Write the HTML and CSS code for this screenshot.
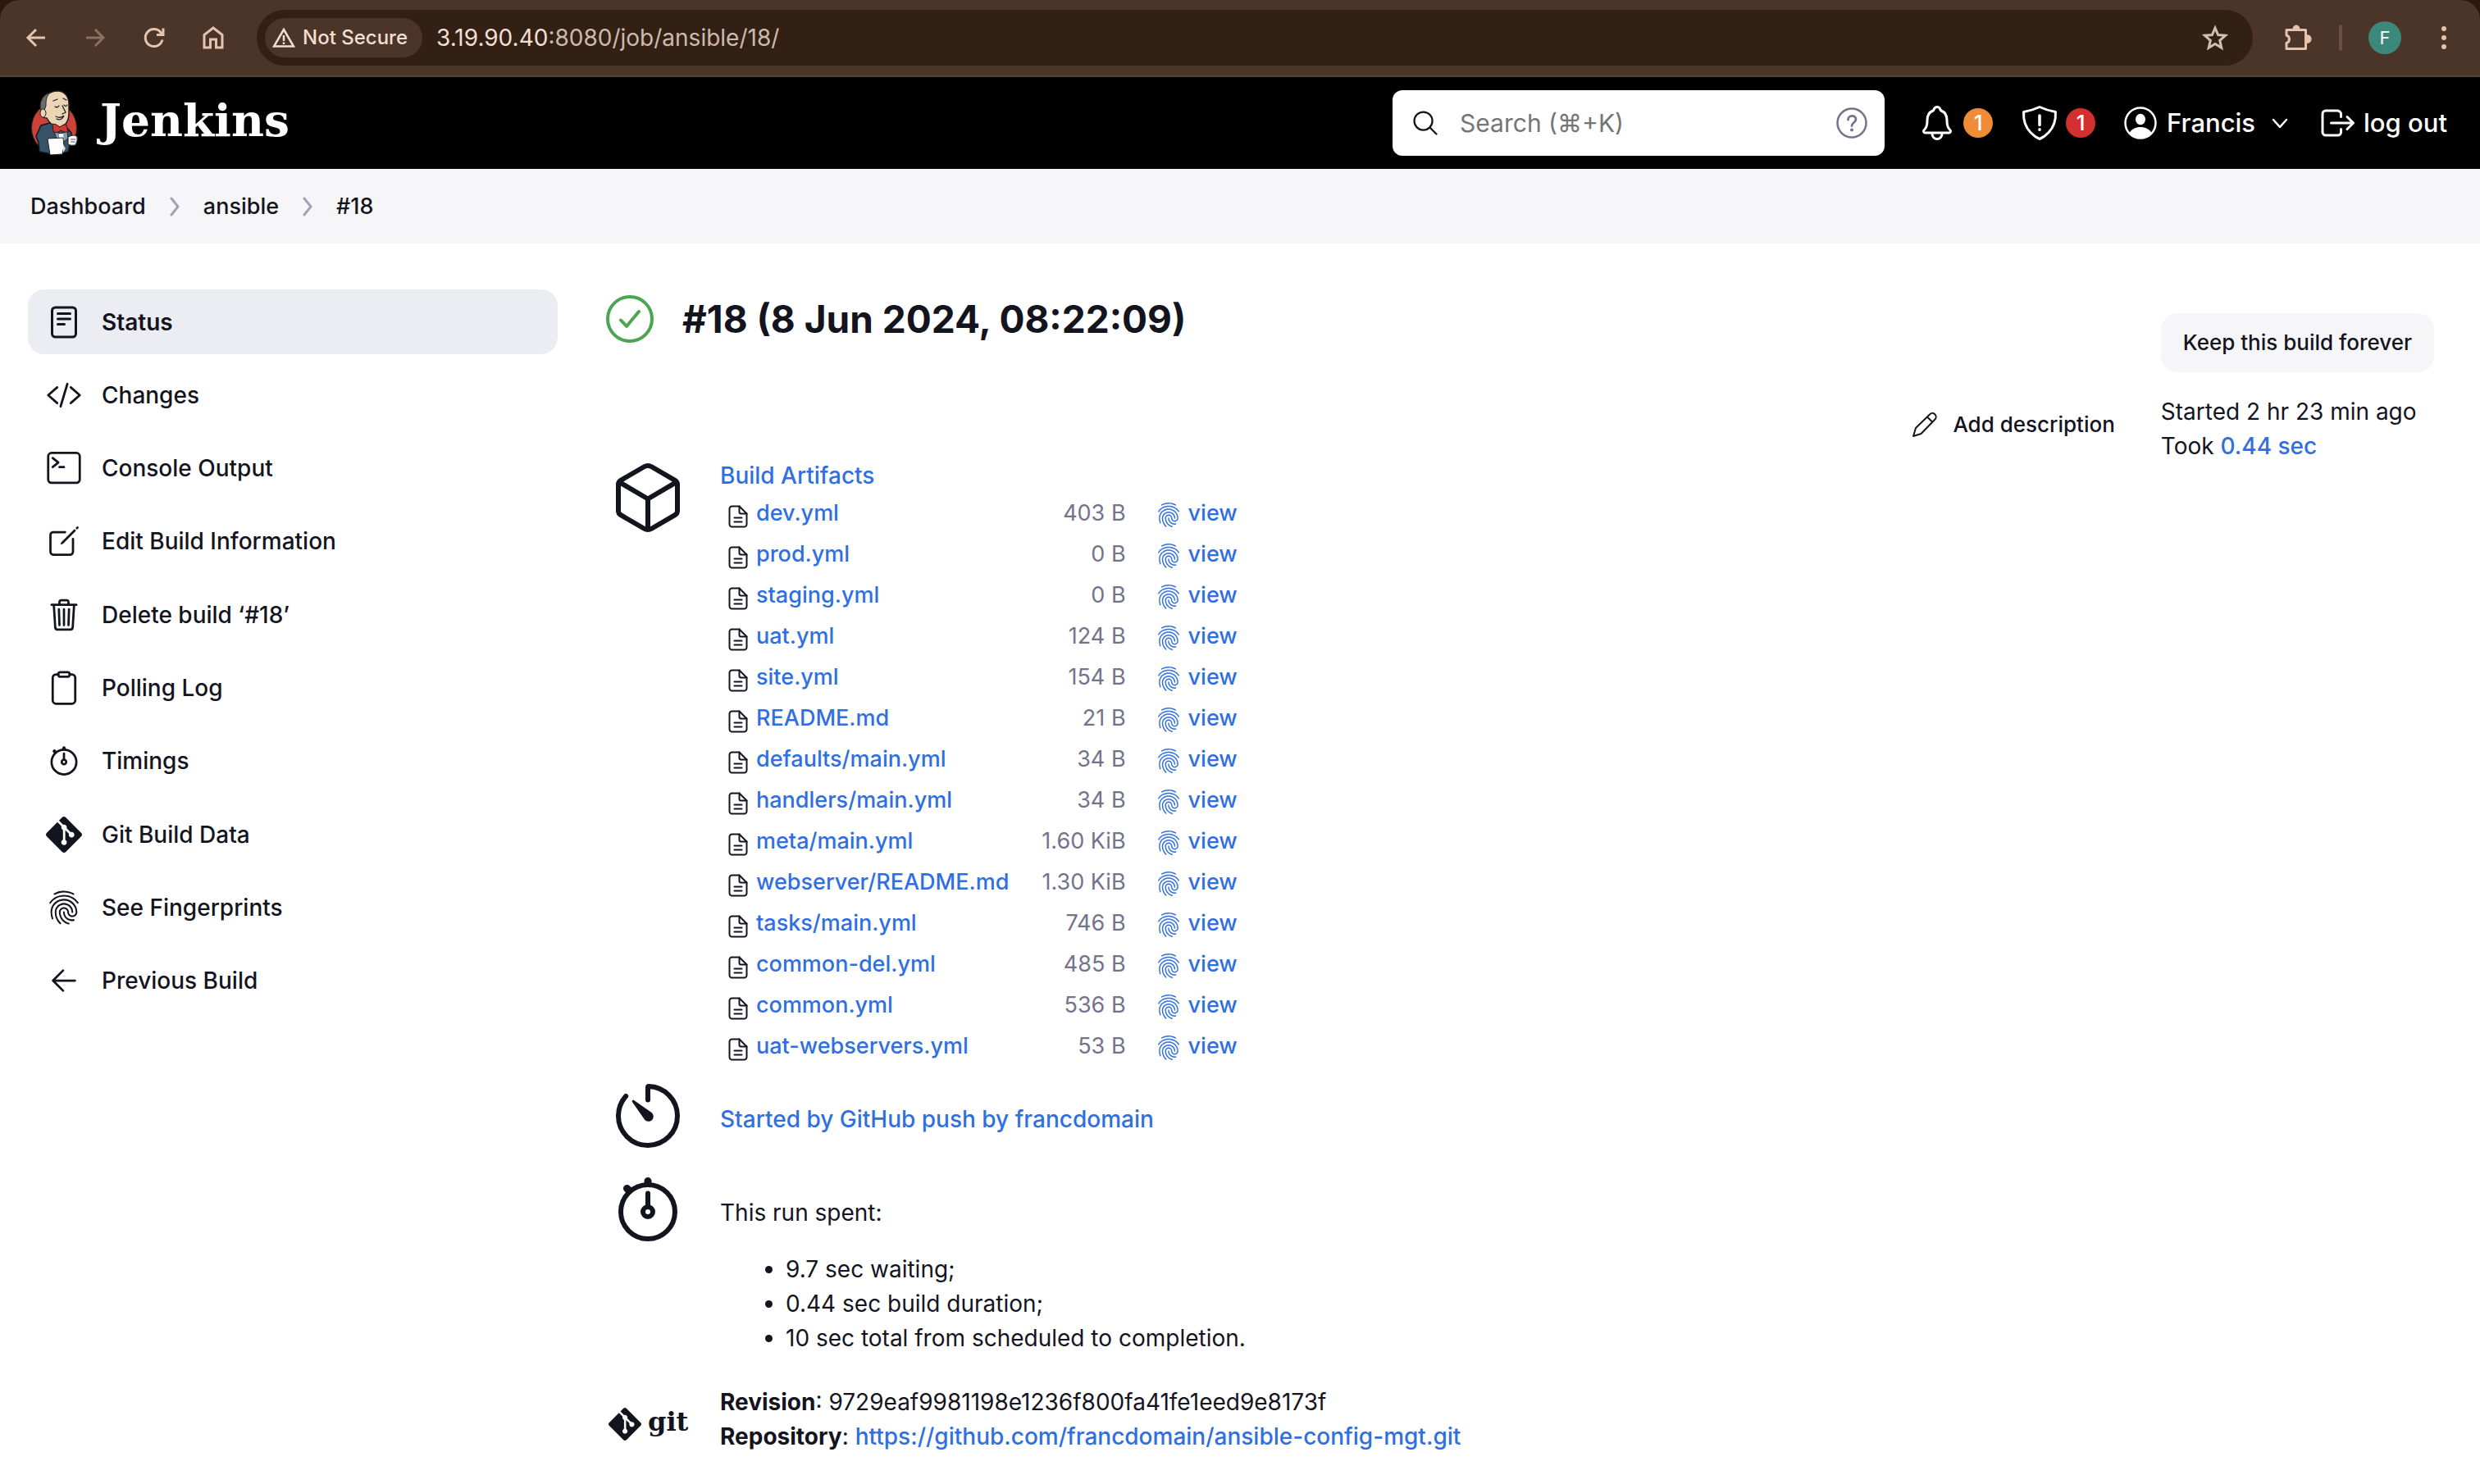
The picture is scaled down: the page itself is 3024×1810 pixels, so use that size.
FILE: index.html
```html
<!DOCTYPE html>
<html lang="en">
<head>
<meta charset="utf-8">
<title>ansible #18 [Jenkins]</title>
<link rel="stylesheet" href="styles.css">
</head>
<body>
<svg class="sprite" aria-hidden="true">
  <symbol id="i-file" viewBox="0 0 24 28"><g fill="none" stroke="currentColor" stroke-width="2" stroke-linejoin="round" stroke-linecap="round"><path d="M13.500 1.500H4.500A3 3 0 0 0 1.500 4.500V23.500A3 3 0 0 0 4.500 26.500H19.500A3 3 0 0 0 22.500 23.500V10.500Z"/><path d="M13.500 1.500V8.500A2 2 0 0 0 15.500 10.500H22.500M7.500 15.500H16.500M7.500 20.500H16.500"/></g></symbol>
  <symbol id="i-finger" viewBox="0 0 512 512"><path fill="currentColor" d="M390.42 75.28a10.45 10.45 0 01-5.32-1.44C340.72 50.08 302.35 40 256.35 40c-45.77 0-89.23 11.28-128.76 33.84C122 77 115.11 74.8 111.87 69a12.4 12.4 0 014.63-16.32A281.81 281.81 0 01256.35 16c49.23 0 92.23 11.28 139.39 36.48a12 12 0 014.85 16.08 11.3 11.3 0 01-10.17 6.72zm-330.79 126a11.73 11.73 0 01-6.7-2.16 12.26 12.26 0 01-2.78-16.8c22.89-33.6 52-60 86.69-78.48 72.58-38.84 165.51-39.12 238.32-.24 34.68 18.48 63.8 44.64 86.69 78a12.29 12.29 0 01-2.78 16.8 11.26 11.26 0 01-16.18-2.88c-20.8-30.24-47.15-54-78.36-70.56-66.34-35.28-151.18-35.28-217.29.24-31.44 16.8-57.79 40.8-78.59 71a10 10 0 01-9.02 5.08zM204.1 491a10.66 10.66 0 01-8.09-3.6C175.9 466.48 165 453 149.55 424c-16-29.52-24.27-65.52-24.27-104.16 0-71.28 58.71-129.36 130.84-129.36S387 248.56 387 319.84a11.56 11.56 0 11-23.11 0c0-58.08-48.32-105.36-107.72-105.36S148.4 261.76 148.4 319.84c0 34.56 7.4 66.48 21.49 92.4 14.8 27.6 25 39.36 42.77 58.08a12.67 12.67 0 010 17 12.44 12.44 0 01-8.56 3.680zM369.85 446.6c-27.51 0-51.78-7.2-71.66-21.36-34.44-24.24-55-63.6-55-105.36a11.57 11.57 0 1123.12 0c0 33.84 16.64 65.76 44.84 85.44 16.41 11.52 35.6 17 58.72 17a130.93 130.93 0 0023.35-2.4c6.24-1.2 12.25 3.12 13.4 9.84a11.92 11.92 0 01-9.47 13.92 148.51 148.51 0 01-27.3 2.920zM323.38 496a13 13 0 01-3-.48c-36.76-10.56-60.8-24.72-86-50.4-32.37-33.36-50.16-77.76-50.16-125.28 0-38.88 31.9-70.56 71.19-70.56s71.2 31.68 71.2 70.56c0 25.68 21.5 46.56 48.08 46.56s48.08-20.88 48.08-46.56c0-90.48-75.13-163.92-167.59-163.92-65.65 0-125.75 37.92-152.79 96.72-9 19.44-13.64 42.24-13.64 67.2 0 18.72 1.61 48.24 15.48 86.64 2.32 6.24-.69 13.2-6.7 15.36a11.34 11.34 0 01-14.79-7 276.39 276.39 0 01-16.88-95c0-28.8 5.32-55 15.72-77.76 30.75-67 98.94-110.4 173.6-110.4 105.18 0 190.71 84.24 190.71 187.92 0 38.88-31.9 70.56-71.2 70.56s-71.2-31.68-71.2-70.56c.01-25.68-21.49-46.6-48.07-46.6s-48.08 20.88-48.08 46.560c0 41 15.26 79.44 43.23 108.24 22 22.56 43 35 75.59 44.16 6.24 1.68 9.71 8.4 8.09 14.64a11.39 11.39 0 01-10.87 9.160z"/></symbol>
  <symbol id="i-git" viewBox="0 0 24 24"><path fill="currentColor" d="M23.546 10.93L13.067.452c-.604-.603-1.582-.603-2.188 0L8.708 2.627l2.76 2.76c.645-.215 1.379-.07 1.889.441.516.515.658 1.258.438 1.9l2.658 2.66c.645-.223 1.387-.078 1.9.435.721.72.721 1.884 0 2.604-.719.719-1.881.719-2.6 0-.539-.541-.674-1.337-.404-1.996L12.86 8.955v6.525c.176.086.342.203.488.348.713.721.713 1.883 0 2.6-.719.721-1.889.721-2.609 0-.719-.719-.719-1.879 0-2.598.182-.18.387-.316.605-.406V8.835c-.217-.091-.424-.222-.6-.401-.545-.545-.676-1.342-.396-2.009L7.636 3.7.45 10.881c-.6.605-.6 1.584 0 2.189l10.48 10.477c.604.604 1.582.604 2.186 0l10.43-10.43c.605-.603.605-1.582 0-2.187"/></symbol>
  <symbol id="i-stopwatch" viewBox="0 0 512 512"><g fill="none" stroke="currentColor" stroke-width="32" stroke-linecap="round" stroke-linejoin="round"><path d="M256 232v-80"/><path stroke-width="48" d="M256 88V72M132 132l-12-12"/><circle cx="256" cy="272" r="32"/><circle cx="256" cy="272" r="176"/></g></symbol>
  <symbol id="i-chevron" viewBox="0 0 16 26"><path d="M4 3l8 10-8 10" fill="none" stroke="currentColor" stroke-width="3" stroke-linecap="round" stroke-linejoin="round"/></symbol>
</svg>

<div class="browser">
  <div class="toolbar">
    <div class="nav">
      <button class="tool" aria-label="Back"><svg viewBox="0 0 32 32" class="ico"><path d="M27 16H6M16 6L6 16l10 10"/></svg></button>
      <button class="tool dim" aria-label="Forward" disabled><svg viewBox="0 0 32 32" class="ico"><path d="M5 16h21M16 6l10 10-10 10"/></svg></button>
      <button class="tool" aria-label="Reload"><svg viewBox="0 0 32 32" class="ico"><path d="M26 18.500A10.500 10.500 0 1 1 24 9.500L26.500 12M27 4.500V12.500H19"/></svg></button>
      <button class="tool" aria-label="Home"><svg viewBox="0 0 32 32" class="ico"><path stroke-linejoin="miter" d="M5 28V12.500L16 4l11 8.500V28h-7.500V18h-7v10z"/></svg></button>
    </div>
    <div class="address">
      <button class="chip"><svg viewBox="0 0 28 28" class="warn"><path fill="none" stroke="currentColor" stroke-width="2.500" d="M14 4L26 24.500H2z"/><path stroke="currentColor" stroke-width="2.500" d="M14 11v7M14 19.500v2.500"/></svg>Not Secure</button>
      <span class="url">3.19.90.40<span class="path">:8080/job/ansible/18/</span></span>
      <button class="tool star" aria-label="Bookmark"><svg viewBox="0 0 32 32"><path fill="none" stroke="currentColor" stroke-width="3" d="M16 4l3.600 8.500 9 .8-6.900 6 2.100 9L16 23.500 8.200 28.300l2.100-9-6.900-6 9-.8z"/></svg></button>
    </div>
    <div class="extras">
      <button class="tool" aria-label="Extensions"><svg viewBox="0 0 36 36" class="big"><path fill="none" stroke="currentColor" stroke-width="3" stroke-linejoin="round" d="M4 8.500H27.500V31.500H4V24.500a5 5 0 0 0 0-9.500z"/><path fill="currentColor" d="M11.500 7.500a4.500 5 0 0 1 9 0zM28.500 14a5 4.500 0 0 1 0 11z"/></svg></button>
      <span class="rule"></span>
      <button class="avatar">F</button>
      <button class="tool" aria-label="Menu"><svg viewBox="0 0 32 36" class="big"><g fill="currentColor"><circle cx="16" cy="7" r="3"/><circle cx="16" cy="18" r="3"/><circle cx="16" cy="29" r="3"/></g></svg></button>
    </div>
  </div>
</div>

<header class="header">
  <a class="brand" href="#">
    <svg class="butler" viewBox="0 0 60 80" aria-hidden="true">
      <ellipse cx="28" cy="46" rx="27.500" ry="30" fill="#cc4238" stroke="#37251f"/>
      <path d="M10 75L9 64 6 56l6-13 14-4 14 3 9 10-1 12-3 11-15 4z" fill="#365368" stroke="#10181e" stroke-width="1.500"/>
      <path d="M14 18C14 8 22 1 32 1c9 0 14 7 14 16v11c0 9-4 16-11 17-7 0-13-5-16-11-6 0-7-5-5-9z" fill="#ecd5b7" stroke="#231f20" stroke-width="1.500"/>
      <path d="M11 20c0-9 5-15 12-17-5 5-5 10-5 16l-3 8c-2-1-4-3-4-7z" fill="#6b6b70" stroke="#231f20"/>
      <ellipse cx="14.500" cy="28" rx="3.500" ry="5" fill="#ecd5b7" stroke="#231f20"/>
      <path d="M27 13l5-2M39 10l4 2M29 20q3 2 5-1M40 18q2 3 4 0M38 19l4 8-4 2M30 32q6 3 10-1q-3 7-9 4" fill="none" stroke="#231f20" stroke-width="1.300" stroke-linecap="round"/>
      <path d="M28 50l8 3 8-3 1 9-8 6-7-8z" fill="#7f9caf" stroke="#231f20"/><path d="M34 53h5l1 10-3 2-3-5z" fill="#fff"/>
      <path d="M26 41q5 0 9 4 4-4 8-3l2 9q-5 1-9-2-4 4-9 2z" fill="#d33833" stroke="#231f20"/>
      <path d="M20 59l19-1 1 11-2 9-15 1z" fill="#fff" stroke="#231f20"/><path d="M39 66l3 5-3 5z" fill="#ddd"/>
      <path d="M45 57q8-4 11 0 1 5-2 10-6 1-9-1z" fill="#fff" stroke="#231f20"/><path d="M48 60h6M48 63h6" stroke="#555"/>
    </svg>
    <span class="wordmark">Jenkins</span>
  </a>
  <div class="search">
    <svg class="mag" viewBox="0 0 512 512"><g fill="none" stroke="currentColor" stroke-width="32" stroke-linecap="round"><circle cx="221" cy="221" r="157"/><path d="M338 338l110 110"/></g></svg>
    <input type="search" aria-label="Search" placeholder="Search (⌘+K)">
    <a href="#" class="help" aria-label="Help"><svg viewBox="0 0 40 40"><circle cx="20" cy="20" r="17.500" fill="none" stroke="currentColor" stroke-width="2.500"/><path d="M15.500 16c0-6 9.500-6 9.500-.500 0 4-5 4-5 8" fill="none" stroke="currentColor" stroke-width="2.800" stroke-linecap="round"/><circle cx="20" cy="28.500" r="2" fill="currentColor"/></svg></a>
  </div>
  <nav class="account">
    <a href="#" class="alert" aria-label="Notifications"><svg viewBox="0 0 512 512"><path fill="none" stroke="currentColor" stroke-width="32" stroke-linecap="round" stroke-linejoin="round" d="M427.680 351.430C402 320 383.870 304 383.870 217.350 383.870 138 343.350 109.730 310 96c-4.430-1.820-8.600-6-9.950-10.550C294.200 65.540 277.800 48 256 48s-38.210 17.550-44 37.470c-1.350 4.600-5.520 8.710-9.950 10.530-33.390 13.750-73.870 41.920-73.870 121.350C128.130 304 110 320 84.320 351.430 73.680 364.450 83 384 101.610 384h308.880c18.510 0 27.770-19.610 17.190-32.570zM320 384v16a64 64 0 01-128 0v-16"/></svg><span class="badge">1</span></a>
    <a href="#" class="alert" aria-label="Security warnings"><svg viewBox="0 0 512 512"><g fill="none" stroke="currentColor" stroke-width="32" stroke-linecap="round" stroke-linejoin="round"><path d="M463.100 112.370C373.680 96.330 336.710 84.450 256 48c-80.710 36.450-117.680 48.330-207.100 64.370C32.700 369.130 240.580 457.790 256 464c15.420-6.210 223.300-94.870 207.100-351.630z"/><path d="M256 160v122M256 340v4" stroke-width="38"/></g></svg><span class="badge red">1</span></a>
    <a href="#" class="user"><svg viewBox="0 0 44 44"><circle cx="22" cy="22" r="18.500" fill="none" stroke="currentColor" stroke-width="2.500"/><ellipse cx="22" cy="17.500" rx="6" ry="6.800" fill="currentColor"/><path d="M8.500 34.500c4-10 23-10 27 0-7 8-20 8-27 0z" fill="currentColor"/></svg>Francis<svg class="down" viewBox="0 0 20 20"><path d="M2 6l8 9 8-9" fill="none" stroke="currentColor" stroke-width="2.500" stroke-linecap="round" stroke-linejoin="round"/></svg></a>
    <a href="#" class="logout"><svg viewBox="0 0 512 512"><path fill="none" stroke="currentColor" stroke-width="32" stroke-linecap="round" stroke-linejoin="round" d="M304 336v40a40 40 0 01-40 40H104a40 40 0 01-40-40V136a40 40 0 0140-40h152c22.090 0 48 17.910 48 40v40M384 336l80-80-80-80M176 256h280"/></svg>log out</a>
  </nav>
</header>

<nav class="crumbs" aria-label="Breadcrumb">
  <a href="#">Dashboard</a><svg><use href="#i-chevron"/></svg><a href="#">ansible</a><svg><use href="#i-chevron"/></svg><a href="#">#18</a>
</nav>

<div class="page">
  <nav class="side" aria-label="Build">
    <a href="#" class="task active"><svg viewBox="0 0 44 44" class="line"><rect x="7.500" y="4" width="29" height="36" rx="4"/><path d="M14.500 11.500h15M14.500 18h15M14.500 24.500h8"/></svg>Status</a>
    <a href="#" class="task"><svg viewBox="0 0 512 512" class="ion"><path d="M160 368L32 256l128-112M352 368l128-112-128-112M304 96l-96 320"/></svg>Changes</a>
    <a href="#" class="task"><svg viewBox="0 0 512 512" class="ion"><rect x="32" y="40" width="448" height="424" rx="48"/><path d="M96 112l80 64-80 64M192 240h64"/></svg>Console Output</a>
    <a href="#" class="task"><svg viewBox="0 0 512 512" class="ion"><path d="M384 224v184a40 40 0 01-40 40H104a40 40 0 01-40-40V168a40 40 0 0140-40h167.480"/><path d="M459.940 53.250a16.060 16.060 0 00-23.220-.560L424.350 65a8 8 0 000 11.310l11.340 11.320a8 8 0 0011.340 0l12.060-12c6.100-6.090 6.670-16.010.850-22.380zM399.340 90L218.820 270.200a9 9 0 00-2.310 3.930L208.160 299a3.910 3.910 0 004.860 4.860l24.850-8.350a9 9 0 003.930-2.310L422 112.660a9 9 0 000-12.660l-9.950-10a9 9 0 00-12.710 0z" fill="currentColor" stroke="none"/></svg>Edit Build Information</a>
    <a href="#" class="task"><svg viewBox="0 0 512 512" class="ion"><path d="M112 112l20 320c.950 18.490 14.400 32 32 32h184c17.670 0 30.870-13.510 32-32l20-320M80 112h352M192 112V72a23.930 23.930 0 0124-24h80a23.930 23.930 0 0124 24v40M256 176v224M184 176l8 224M328 176l-8 224"/></svg>Delete build ‘#18’</a>
    <a href="#" class="task"><svg viewBox="0 0 512 512" class="ion"><path d="M336 64h32a48 48 0 0148 48v320a48 48 0 01-48 48H144a48 48 0 01-48-48V112a48 48 0 0148-48h32"/><rect x="176" y="32" width="160" height="64" rx="26"/></svg>Polling Log</a>
    <a href="#" class="task"><svg><use href="#i-stopwatch"/></svg>Timings</a>
    <a href="#" class="task"><svg><use href="#i-git"/></svg>Git Build Data</a>
    <a href="#" class="task"><svg><use href="#i-finger"/></svg>See Fingerprints</a>
    <a href="#" class="task"><svg viewBox="0 0 512 512" class="ion"><path d="M244 400L100 256l144-144M120 256h292"/></svg>Previous Build</a>
  </nav>

  <main class="main">
    <div class="content">
      <h1><svg viewBox="0 0 60 60" class="ok"><g fill="none" stroke="currentColor" stroke-width="4" stroke-linecap="round" stroke-linejoin="round"><circle cx="30" cy="30" r="27"/><path d="M19 31.500l7 7.500L41 21"/></g></svg>#18 (8 Jun 2024, 08:22:09)</h1>
      <div class="summary">
        <div class="pic"><svg viewBox="0 0 512 512" class="ion"><path d="M448 341.370V170.610A32 32 0 00432.110 143l-152-88.460a47.940 47.940 0 00-48.240 0L79.890 143A32 32 0 0064 170.610v170.760A32 32 0 0079.890 369l152 88.460a48 48 0 0048.240 0l152-88.460A32 32 0 00448 341.370zM69 153.990l187 110 187-110M256 463.990v-200"/></svg></div>
        <div class="info">
          <a href="#">Build Artifacts</a>
          <table class="files">
            <tr><td><svg><use href="#i-file"/></svg></td><td><a href="#">dev.yml</a></td><td class="size">403 B</td><td><a href="#" class="view"><svg><use href="#i-finger"/></svg>view</a></td></tr>
            <tr><td><svg><use href="#i-file"/></svg></td><td><a href="#">prod.yml</a></td><td class="size">0 B</td><td><a href="#" class="view"><svg><use href="#i-finger"/></svg>view</a></td></tr>
            <tr><td><svg><use href="#i-file"/></svg></td><td><a href="#">staging.yml</a></td><td class="size">0 B</td><td><a href="#" class="view"><svg><use href="#i-finger"/></svg>view</a></td></tr>
            <tr><td><svg><use href="#i-file"/></svg></td><td><a href="#">uat.yml</a></td><td class="size">124 B</td><td><a href="#" class="view"><svg><use href="#i-finger"/></svg>view</a></td></tr>
            <tr><td><svg><use href="#i-file"/></svg></td><td><a href="#">site.yml</a></td><td class="size">154 B</td><td><a href="#" class="view"><svg><use href="#i-finger"/></svg>view</a></td></tr>
            <tr><td><svg><use href="#i-file"/></svg></td><td><a href="#">README.md</a></td><td class="size">21 B</td><td><a href="#" class="view"><svg><use href="#i-finger"/></svg>view</a></td></tr>
            <tr><td><svg><use href="#i-file"/></svg></td><td><a href="#">defaults/main.yml</a></td><td class="size">34 B</td><td><a href="#" class="view"><svg><use href="#i-finger"/></svg>view</a></td></tr>
            <tr><td><svg><use href="#i-file"/></svg></td><td><a href="#">handlers/main.yml</a></td><td class="size">34 B</td><td><a href="#" class="view"><svg><use href="#i-finger"/></svg>view</a></td></tr>
            <tr><td><svg><use href="#i-file"/></svg></td><td><a href="#">meta/main.yml</a></td><td class="size">1.60 KiB</td><td><a href="#" class="view"><svg><use href="#i-finger"/></svg>view</a></td></tr>
            <tr><td><svg><use href="#i-file"/></svg></td><td><a href="#">webserver/README.md</a></td><td class="size">1.30 KiB</td><td><a href="#" class="view"><svg><use href="#i-finger"/></svg>view</a></td></tr>
            <tr><td><svg><use href="#i-file"/></svg></td><td><a href="#">tasks/main.yml</a></td><td class="size">746 B</td><td><a href="#" class="view"><svg><use href="#i-finger"/></svg>view</a></td></tr>
            <tr><td><svg><use href="#i-file"/></svg></td><td><a href="#">common-del.yml</a></td><td class="size">485 B</td><td><a href="#" class="view"><svg><use href="#i-finger"/></svg>view</a></td></tr>
            <tr><td><svg><use href="#i-file"/></svg></td><td><a href="#">common.yml</a></td><td class="size">536 B</td><td><a href="#" class="view"><svg><use href="#i-finger"/></svg>view</a></td></tr>
            <tr><td><svg><use href="#i-file"/></svg></td><td><a href="#">uat-webservers.yml</a></td><td class="size">53 B</td><td><a href="#" class="view"><svg><use href="#i-finger"/></svg>view</a></td></tr>
          </table>
        </div>

        <div class="pic"><svg viewBox="0 0 512 512" class="ion"><path d="M112.910 128A191.850 191.850 0 0064 254c-1.180 106.350 85.650 193.800 192 194 106.200.200 192-85.830 192-192 0-104.540-83.550-189.610-187.500-192a4.360 4.360 0 00-4.500 4.370V152"/><path fill="currentColor" stroke="none" d="M233.380 278.630l-79-113a8.130 8.130 0 0111.320-11.320l113 79a32.500 32.500 0 01-37.250 53.260 33.210 33.210 0 01-8.070-7.940z"/></svg></div>
        <div class="info lowered"><a href="#">Started by GitHub push by francdomain</a></div>

        <div class="pic"><svg><use href="#i-stopwatch"/></svg></div>
        <div class="info lowered">
          This run spent:
          <ul>
            <li>9.7 sec waiting;</li>
            <li>0.44 sec build duration;</li>
            <li>10 sec total from scheduled to completion.</li>
          </ul>
        </div>

        <div class="gitlogo"><svg><use href="#i-git"/></svg><span>git</span></div>
        <div class="info">
          <b>Revision</b>: 9729eaf9981198e1236f800fa41fe1eed9e8173f<br>
          <b>Repository</b>: <a href="#">https://github.com/francdomain/ansible-config-mgt.git</a>
        </div>
      </div>
    </div>
    <aside class="actions">
      <button class="describe"><svg viewBox="0 0 32 32"><path fill="none" stroke="currentColor" stroke-width="2" stroke-linejoin="round" d="M2 30l3-10L22 3.500a4 4 0 0 1 6.500 6L11.500 27zM19 6.500L25.500 13"/></svg>Add description</button>
      <div class="timing">
        <button class="keep">Keep this build forever</button>
        <div>Started 2 hr 23 min ago<br>Took <a href="#">0.44 sec</a></div>
      </div>
    </aside>
  </main>
</div>
</body>
</html>
```
FILE: styles.css
```css
* { box-sizing: border-box; }

body {
  margin: 0;
  background: #fff;
  color: #14141f;
  font: 400 28px/42px Inter, "Noto Sans", sans-serif;
}

a { color: #2f6fe0; font-weight: 500; text-decoration: none; }
button { border: 0; padding: 0; background: none; color: inherit; font: inherit; }
svg { display: block; flex: none; }
.sprite { display: none; }
.ion, .line { fill: none; stroke: currentColor; stroke-linecap: round; stroke-linejoin: round; }
.ion { stroke-width: 32; }
.line { stroke-width: 3; }

/* Browser toolbar */
.browser { background: #2a190f; }
.toolbar {
  display: flex;
  align-items: center;
  padding: 12px 26px 12px 28px;
  border-bottom: 2px solid #4f4540;
  border-radius: 24px 24px 0 0;
  background: #4a3528;
  color: #e6c3ad;
}
.nav { display: flex; gap: 40px; margin-right: 37px; }
.tool svg { width: 32px; height: 32px; }
.tool .big { width: 36px; height: 36px; }
.ico { fill: none; stroke: currentColor; stroke-width: 3; }
.dim { color: #8b705f; }
.address {
  flex: 1;
  display: flex;
  align-items: center;
  height: 68px;
  padding: 0 30px 0 10px;
  border-radius: 34px;
  background: #332014;
  color: #f3ded3;
}
.chip {
  display: flex;
  align-items: center;
  gap: 9px;
  height: 48px;
  padding: 0 18px 0 9px;
  border-radius: 24px;
  background: #4a3528;
  font-size: 24px;
  font-weight: 500;
}
.warn { width: 28px; height: 28px; }
.url { flex: 1; margin-left: 17px; }
.path { color: #cdb9ad; }
.star { color: #d0beb5; }
.extras { display: flex; align-items: center; margin-left: 37px; }
.rule { width: 4px; height: 32px; margin: 0 32px; border-radius: 2px; background: #6b4f40; }
.avatar {
  width: 40px;
  height: 40px;
  margin-right: 34px;
  border-radius: 50%;
  background: #3c887a;
  color: #fff;
  font-size: 22px;
  line-height: 40px;
}

/* Jenkins header */
.header {
  display: flex;
  align-items: center;
  height: 112px;
  padding: 0 40px 0 38px;
  background: #000;
}
.brand { display: flex; align-items: center; gap: 24px; margin-right: auto; color: #fff; }
.butler { width: 60px; height: 80px; }
.wordmark { padding-bottom: 6px; font: 700 55px/74px "DejaVu Serif", serif; }
.search {
  display: flex;
  align-items: center;
  width: 600px;
  height: 80px;
  padding: 0 20px 0 22px;
  border-radius: 12px;
  background: #fff;
}
.mag { width: 36px; height: 36px; }
.search input {
  flex: 1;
  min-width: 0;
  margin-left: 24px;
  padding: 0;
  border: 0;
  outline: 0;
  background: none;
  font: 400 30px/48px Inter, "DejaVu Sans", sans-serif;
}
.search input::placeholder { color: #757575; }
.help { color: #73738c; }
.help svg { width: 40px; height: 40px; }
.account { display: flex; align-items: center; margin-left: 40px; }
.account a { display: flex; align-items: center; color: #fff; font-size: 31px; }
.account svg { width: 48px; height: 48px; }
.account .alert { gap: 8px; margin-right: 33px; }
.account .badge {
  width: 36px;
  height: 36px;
  border-radius: 50%;
  background: #f08c35;
  font-size: 26px;
  line-height: 36px;
  text-align: center;
}
.account .red { background: #d42f2f; }
.user { gap: 10px; }
.account .user svg { width: 44px; height: 44px; }
.account .user .down { width: 20px; height: 20px; margin-left: 10px; }
.logout { gap: 8px; margin-left: 36px; }

.crumbs {
  display: flex;
  align-items: center;
  gap: 27px;
  height: 91px;
  padding: 0 37px;
  background: #f6f6f8;
  font-size: 27px;
}
.crumbs a { color: #14141f; }
.crumbs svg { width: 16px; height: 26px; color: #a3a3b5; }

/* Page body */
.page { display: flex; align-items: flex-start; padding: 56px 56px 32px 34px; }
.side {
  flex: none;
  display: flex;
  flex-direction: column;
  justify-content: space-between;
  width: 646px;
  min-height: 883px;
}
.task {
  display: flex;
  align-items: center;
  gap: 24px;
  height: 79px;
  padding: 0 22px;
  border-radius: 20px;
  color: #14141f;
}
.task svg { width: 44px; height: 44px; }
.active { background: #ecedf3; font-weight: 600; }

.main { flex: 1; display: flex; align-items: flex-start; margin-left: 58px; }
.content { flex: 1; }
h1 {
  display: flex;
  align-items: center;
  gap: 34px;
  margin: 0 0 134px;
  font-size: 46px;
  font-weight: 700;
  line-height: 72px;
}
.ok { width: 60px; height: 60px; color: #4ba551; }
.summary { display: grid; grid-template-columns: 100px 1fr; gap: 12px 40px; align-items: start; }
.pic { display: flex; justify-content: flex-end; height: 102px; }
.pic svg { width: 96px; height: 96px; }
.lowered { padding-top: 31px; }
.info b { font-weight: 700; }
.files { border-spacing: 0; font-size: 27px; }
.files td { height: 50px; padding: 0; }
.files td:first-child { width: 44px; padding: 8px 0 0 10px; }
.files td:first-child svg { width: 24px; height: 28px; }
.files .size { padding-left: 40px; padding-right: 36px; text-align: right; color: #73738c; }
.view { display: flex; align-items: center; gap: 8px; }
.view svg { width: 32px; height: 32px; margin-top: 4px; }
ul { margin: 27px 0 24px; padding-left: 80px; }
.gitlogo { display: flex; align-items: center; gap: 8px; height: 96px; padding-left: 4px; }
.gitlogo svg { width: 40px; height: 40px; }
.gitlogo span { padding-bottom: 6px; font: 700 32px/40px "DejaVu Serif", serif; }

.actions { display: flex; align-items: flex-start; gap: 56px; padding-top: 29px; }
.describe { display: flex; align-items: center; gap: 18px; margin-top: 115px; font-size: 26px; font-weight: 500; }
.describe svg { width: 32px; height: 32px; }
.keep {
  height: 72px;
  margin-bottom: 27px;
  padding: 0 27px;
  border-radius: 20px;
  background: #f6f6f9;
  font-size: 26px;
  font-weight: 500;
}
```
